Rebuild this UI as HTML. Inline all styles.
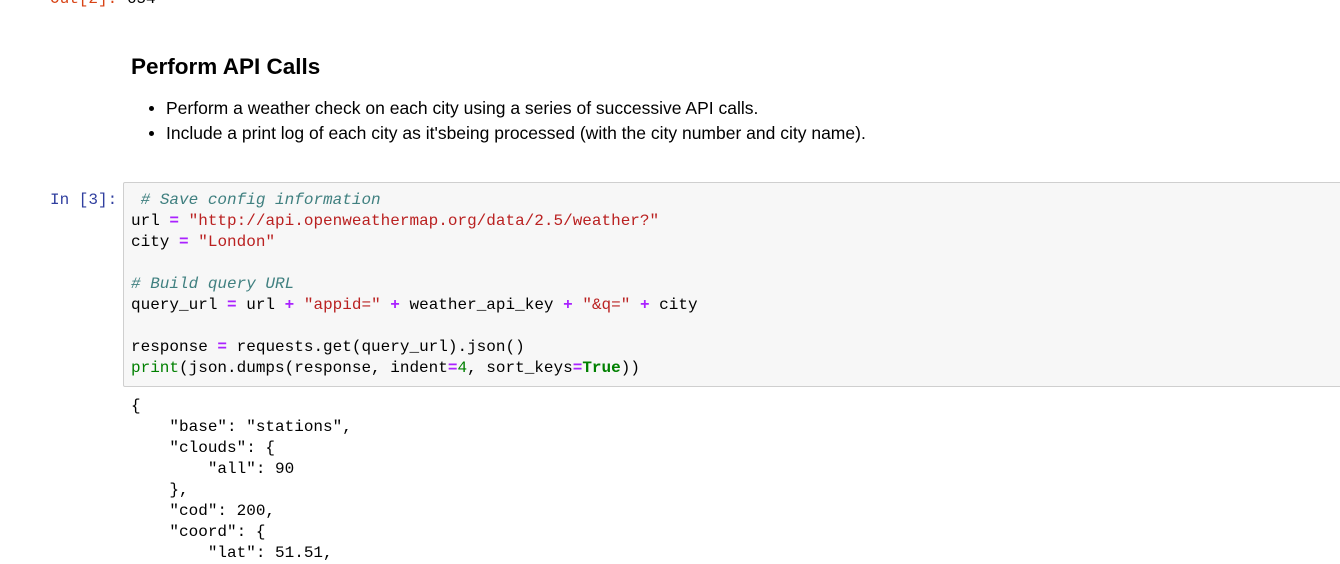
<!DOCTYPE html>
<html><head><style>
body{margin:0;background:#fff;width:1340px;height:558px;overflow:hidden;position:relative;font-family:"Liberation Sans",Arial,sans-serif;color:#000}
.abs{position:absolute;white-space:pre}
.mono{font-family:"Liberation Mono",monospace;font-size:16px;letter-spacing:0;line-height:21px}
h2{position:absolute;left:131px;top:53px;margin:0;font-size:22.5px;font-weight:bold;line-height:28px}
.li{position:absolute;left:166px;font-size:17.5px;line-height:22px;white-space:pre}
.li:before{content:"";position:absolute;left:-17px;top:9px;width:5px;height:5px;border-radius:50%;background:#000}
.box{position:absolute;left:123px;top:182px;width:1230px;height:203px;background:#f7f7f7;border:1px solid #cfcfcf;border-radius:2px}
.c{color:#408080;font-style:italic}.s{color:#ba2121}.o{color:#aa22ff;font-weight:bold}.b{color:#008000}.k{color:#008000;font-weight:bold}.n{color:#008000}
</style></head><body>
<div class="abs mono" style="left:50px;top:-11px"><span style="color:#d84315">Out[2]:</span> 654</div>
<h2>Perform API Calls</h2>
<div class="li" style="top:97px">Perform a weather check on each city using a series of successive API calls.</div>
<div class="li" style="top:122px">Include a print log of each city as it'sbeing processed (with the city number and city name).</div>
<div class="abs mono" style="left:50px;top:190px;color:#303f9f">In [3]:</div>
<div class="box"></div>
<div class="abs mono" style="left:131px;top:190px"> <span class="c"># Save config information</span>
url <span class="o">=</span> <span class="s">"http://api.openweathermap.org/data/2.5/weather?"</span>
city <span class="o">=</span> <span class="s">"London"</span>

<span class="c"># Build query URL</span>
query_url <span class="o">=</span> url <span class="o">+</span> <span class="s">"appid="</span> <span class="o">+</span> weather_api_key <span class="o">+</span> <span class="s">"&amp;q="</span> <span class="o">+</span> city

response <span class="o">=</span> requests.get(query_url).json()
<span class="b">print</span>(json.dumps(response, indent<span class="o">=</span><span class="n">4</span>, sort_keys<span class="o">=</span><span class="k">True</span>))</div>
<div class="abs mono" style="left:131px;top:396px">{
    "base": "stations",
    "clouds": {
        "all": 90
    },
    "cod": 200,
    "coord": {
        "lat": 51.51,</div>
</body></html>
